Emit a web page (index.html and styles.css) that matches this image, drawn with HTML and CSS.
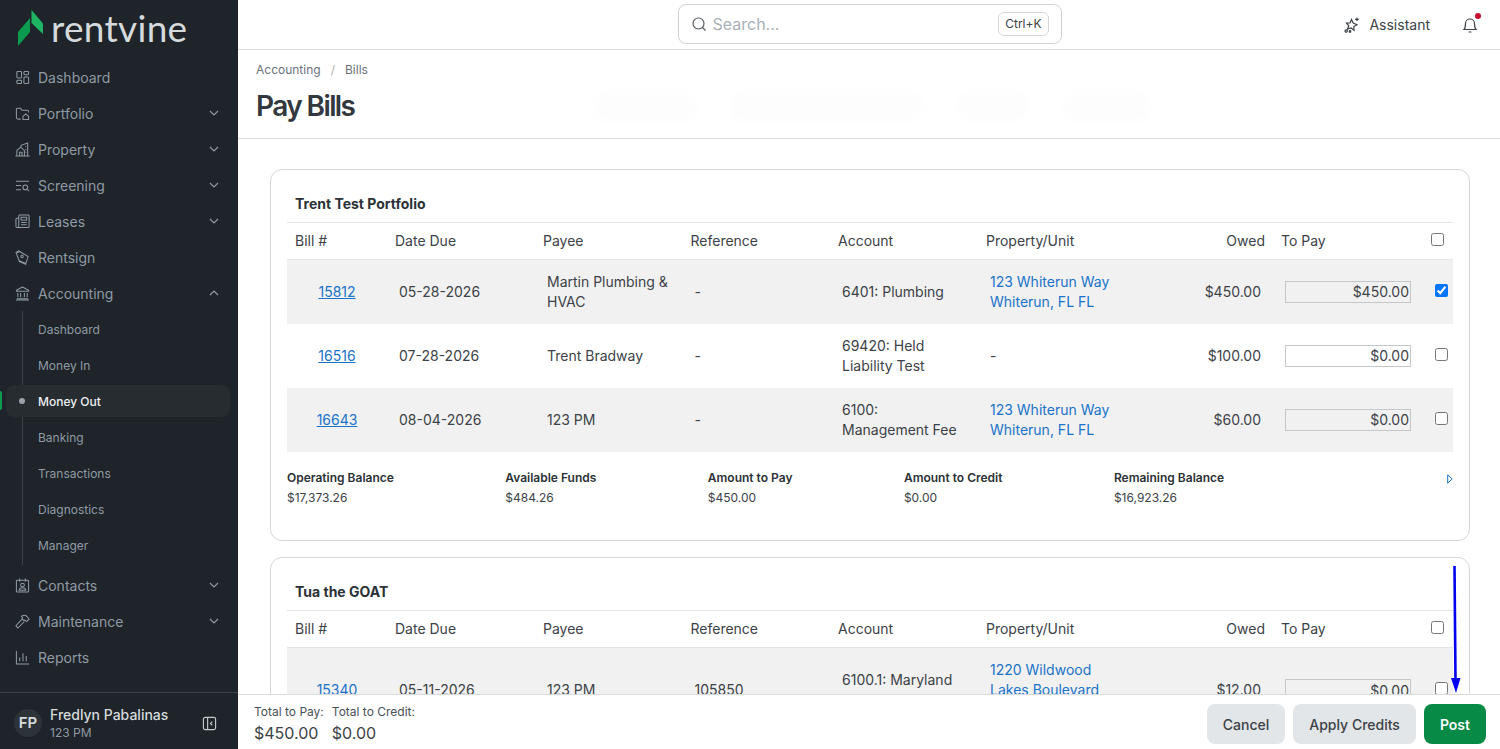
FILE: index.html
```html
<!DOCTYPE html>
<html>
  <head>
    <title>Pay Bills</title>
    <link rel="stylesheet" href="styles.css">
  </head>
  <body>
    <aside class="sidebar">
      <div class="logo">
        <svg class="logo-mark" width="26" height="36" viewBox="0 0 26 36">
          <path d="M13.5 0 25 13.5 V24 L13.5 13 Z" fill="#1fb364"/>
          <path d="M12 8 V22 L0 36 V22 Z" fill="#0c9a4e"/>
        </svg>
        <span class="logo-text">rentvine</span>
      </div>

      <nav class="nav">
        <a class="nav-item">
          <svg class="nav-icon" viewBox="0 0 16 16"><rect x="2" y="1.5" width="5" height="7" rx="1"/><rect x="9.500" y="1.5" width="5" height="3.500" rx="1"/><rect x="2" y="11" width="5" height="3.500" rx="1"/><rect x="9.500" y="7.500" width="5" height="7" rx="1"/></svg>
          Dashboard
        </a>
        <a class="nav-item">
          <svg class="nav-icon" viewBox="0 0 16 16"><path d="M6 14H3a2 2 0 0 1-1.500-2V3.500A1 1 0 0 1 2.500 2.500H6l1.500 2H13a1.500 1.500 0 0 1 1.500 1.500V7"/><path d="M8.500 11 11.500 8.500 14.500 11V14.500H8.500Z"/></svg>
          Portfolio
          <svg class="chevron" viewBox="0 0 12 12"><path d="M2 4 6 8 10 4"/></svg>
        </a>
        <a class="nav-item">
          <svg class="nav-icon" viewBox="0 0 16 16"><path d="M.5 15H15.500M2 15V9L6 5.500 10 9V15M5 15V11H7.500V15M6.500 5V3.500L13.500 1V15M11 5H12M11 8H12M11 11H12"/></svg>
          Property
          <svg class="chevron" viewBox="0 0 12 12"><path d="M2 4 6 8 10 4"/></svg>
        </a>
        <a class="nav-item">
          <svg class="nav-icon" viewBox="0 0 16 16"><path d="M1 3.500H15M1 8H6.500M1 12.500H6.500"/><circle cx="11" cy="10" r="2.500"/><path d="M13 12 15 14"/></svg>
          Screening
          <svg class="chevron" viewBox="0 0 12 12"><path d="M2 4 6 8 10 4"/></svg>
        </a>
        <a class="nav-item">
          <svg class="nav-icon" viewBox="0 0 16 16"><path d="M4 14.500H14a1 1 0 0 0 1-1V2a1 1 0 0 0-1-1H5a1 1 0 0 0-1 1V13a1.500 1.500 0 0 1-3 0V5.500A1 1 0 0 1 2 4.500H4"/><rect x="6.500" y="3.500" width="6" height="3"/><path d="M6.500 9H12.500M6.500 11.500H12.500"/></svg>
          Leases
          <svg class="chevron" viewBox="0 0 12 12"><path d="M2 4 6 8 10 4"/></svg>
        </a>
        <a class="nav-item">
          <svg class="nav-icon" viewBox="0 0 16 16"><path d="M1 2.500 4 1 14 7 11.500 14.500 4.500 11.500Z"/><circle cx="7.500" cy="7" r="1.300"/><path d="M12 15.500 4 12M5 2 1.500 3"/></svg>
          Rentsign
        </a>
        <a class="nav-item">
          <svg class="nav-icon" viewBox="0 0 16 16"><path d="M8 1 14.500 4.500V5.500H1.500V4.500ZM3 7.500V12M6 7.500V12M10 7.500V12M13 7.500V12M2 13.500H14M1 15H15"/></svg>
          Accounting
          <svg class="chevron" viewBox="0 0 12 12"><path d="M2 8 6 4 10 8"/></svg>
        </a>

        <div class="subnav">
          <a class="sub-item">Dashboard</a>
          <a class="sub-item">Money In</a>
          <a class="sub-item active">Money Out</a>
          <a class="sub-item">Banking</a>
          <a class="sub-item">Transactions</a>
          <a class="sub-item">Diagnostics</a>
          <a class="sub-item">Manager</a>
        </div>

        <a class="nav-item">
          <svg class="nav-icon" viewBox="0 0 16 16"><rect x="1.500" y="2.500" width="13" height="12.500" rx="1"/><path d="M5 .5V4M11 .5V4"/><circle cx="8" cy="7.500" r="2"/><path d="M4.500 13C4.800 11 6 10.500 8 10.500S11.200 11 11.500 13Z"/></svg>
          Contacts
          <svg class="chevron" viewBox="0 0 12 12"><path d="M2 4 6 8 10 4"/></svg>
        </a>
        <a class="nav-item">
          <svg class="nav-icon" viewBox="0 0 16 16"><path d="M8 5 1 12.500 3 15 10 8M7 2.500C9 .5 12 1 13 3L15 5.500 12.500 8 10.500 6.500 9.500 7 7.500 5 8 4Z"/></svg>
          Maintenance
          <svg class="chevron" viewBox="0 0 12 12"><path d="M2 4 6 8 10 4"/></svg>
        </a>
        <a class="nav-item">
          <svg class="nav-icon" viewBox="0 0 16 16"><path d="M1.500 1V15H15M5 12V8M8.500 12V3.500M12 12V6.500"/></svg>
          Reports
        </a>
      </nav>

      <div class="user">
        <div class="avatar">FP</div>
        <div class="user-info">
          <div class="user-name">Fredlyn Pabalinas</div>
          <div class="user-org">123 PM</div>
        </div>
        <svg class="collapse" viewBox="0 0 16 16"><rect x="1.500" y="1.500" width="13" height="13" rx="2"/><path d="M6 1.500V14.500M11 6 9 8 11 10"/></svg>
      </div>
    </aside>

    <div class="main">
      <header class="topbar">
        <div class="search">
          <svg class="search-icon" viewBox="0 0 16 16"><circle cx="7.500" cy="7.500" r="5.500"/><path d="M11.500 11.500 14.500 14.500"/></svg>
          <span class="search-text">Search...</span>
          <span class="kbd">Ctrl+K</span>
        </div>
        <div class="top-actions">
          <a class="assistant">
            <svg class="assistant-icon" viewBox="0 0 16 16"><path d="M7.500 2.500 9.200 6 13 7.800 9.800 9.600 10 13.200 7 11 3.500 12 4.800 8.800 2.500 6 6 6Z"/><path d="M13 .5V4M11.200 2.300H14.800"/><circle cx="2.200" cy="14" r="1.200"/><circle cx="6" cy="14.500" r=".8"/></svg>
            Assistant
          </a>
          <div class="bell">
            <svg viewBox="0 0 16 16" width="16" height="16"><path d="M2 12.500C3.500 11 3.500 10 3.500 6.500a4.500 4.500 0 0 1 9 0C12.500 10 12.500 11 14 12.500ZM6.500 15H9.500"/></svg>
            <span class="bell-dot"></span>
          </div>
        </div>
      </header>

      <div class="page-head">
        <div class="crumbs"><span>Accounting</span><span class="crumb-sep">/</span><span>Bills</span></div>
        <div class="title-row">
          <h1>Pay Bills</h1>
          <div class="ghosts">
            <span class="ghost g1"></span><span class="ghost g2"></span><span class="ghost g3"></span><span class="ghost g4"></span>
          </div>
        </div>
      </div>

      <div class="content">
        <section class="card">
          <h2>Trent Test Portfolio</h2>
          <table class="bills">
            <thead>
              <tr>
                <th class="c-bill">Bill #</th><th class="c-date">Date Due</th><th class="c-payee">Payee</th><th class="c-ref">Reference</th><th class="c-acct">Account</th><th class="c-prop">Property/Unit</th><th class="c-owed">Owed</th><th class="c-pay">To Pay</th><th class="c-check"><input type="checkbox"></th>
              </tr>
            </thead>
            <tbody>
              <tr class="shaded">
                <td class="c-bill"><a class="link-u">15812</a></td><td>05-28-2026</td><td>Martin Plumbing &amp; HVAC</td><td>-</td><td>6401: Plumbing</td><td><a class="link">123 Whiterun Way<br>Whiterun, FL FL</a></td><td class="c-owed">$450.00</td><td><input class="pay locked" value="$450.00"></td><td class="c-check"><input type="checkbox" checked></td>
              </tr>
              <tr>
                <td class="c-bill"><a class="link-u">16516</a></td><td>07-28-2026</td><td>Trent Bradway</td><td>-</td><td>69420: Held Liability Test</td><td>-</td><td class="c-owed">$100.00</td><td><input class="pay" value="$0.00"></td><td class="c-check"><input type="checkbox"></td>
              </tr>
              <tr class="shaded">
                <td class="c-bill"><a class="link-u">16643</a></td><td>08-04-2026</td><td>123 PM</td><td>-</td><td>6100: Management Fee</td><td><a class="link">123 Whiterun Way<br>Whiterun, FL FL</a></td><td class="c-owed">$60.00</td><td><input class="pay locked" value="$0.00"></td><td class="c-check"><input type="checkbox"></td>
              </tr>
            </tbody>
          </table>
          <div class="stats">
            <div><b>Operating Balance</b><span>$17,373.26</span></div>
            <div><b>Available Funds</b><span>$484.26</span></div>
            <div><b>Amount to Pay</b><span>$450.00</span></div>
            <div><b>Amount to Credit</b><span>$0.00</span></div>
            <div><b>Remaining Balance</b><span>$16,923.26</span></div>
            <div></div>
            <svg class="expand" viewBox="0 0 6 10"><path d="M.7 .8 5.200 5 .7 9.200Z"/></svg>
          </div>
        </section>

        <section class="card">
          <h2>Tua the GOAT</h2>
          <table class="bills">
            <thead>
              <tr>
                <th class="c-bill">Bill #</th><th class="c-date">Date Due</th><th class="c-payee">Payee</th><th class="c-ref">Reference</th><th class="c-acct">Account</th><th class="c-prop">Property/Unit</th><th class="c-owed">Owed</th><th class="c-pay">To Pay</th><th class="c-check"><input type="checkbox"></th>
              </tr>
            </thead>
            <tbody>
              <tr class="shaded tall">
                <td class="c-bill"><a class="link-u">15340</a></td><td>05-11-2026</td><td>123 PM</td><td>105850</td><td>6100.1: Maryland Management</td><td><a class="link">1220 Wildwood<br>Lakes Boulevard<br>&nbsp;</a></td><td class="c-owed">$12.00</td><td><input class="pay locked" value="$0.00"></td><td class="c-check"><input type="checkbox"></td>
              </tr>
            </tbody>
          </table>
        </section>

        <svg class="annotation" width="12" height="128" viewBox="0 0 12 128"><path d="M3.500 0 4.500 114" stroke="#0000ee" stroke-width="2.600" fill="none"/><path d="M0 112H9.500L5 127Z" fill="#0000ee"/></svg>
      </div>

      <footer class="footer">
        <div class="totals">
          <div><label>Total to Pay:</label><strong>$450.00</strong></div>
          <div><label>Total to Credit:</label><strong>$0.00</strong></div>
        </div>
        <div class="buttons">
          <button class="btn">Cancel</button>
          <button class="btn">Apply Credits</button>
          <button class="btn btn-post">Post</button>
        </div>
      </footer>
    </div>
  </body>
</html>
```

FILE: styles.css
```css
* {
  box-sizing: border-box;
}
html, body {
  height: 100%;
}
body {
  margin: 0;
  display: flex;
  overflow: hidden;
  font-family: Inter, "Liberation Sans", sans-serif;
  font-size: 14px;
  color: #3c4247;
  background-color: white;
}

/* Sidebar */
.sidebar {
  width: 238px;
  flex: none;
  display: flex;
  flex-direction: column;
  background-color: #1e2429;
  color: #8f9aa5;
}
.logo {
  height: 59px;
  flex: none;
  display: flex;
  align-items: flex-start;
  padding: 10px 0 0 18px;
}
.logo-mark {
  flex: none;
}
.logo-text {
  margin-left: 7px;
  font-family: Lato, sans-serif;
  font-size: 37px;
  line-height: 36px;
  font-weight: 400;
  letter-spacing: 0.3px;
  color: #d5dadd;
}
.nav {
  flex: 1;
}
.nav-item {
  position: relative;
  height: 36px;
  display: flex;
  align-items: center;
  padding-left: 15px;
}
.nav-icon {
  width: 15px;
  height: 15px;
  margin-right: 8px;
  fill: none;
  stroke: #8f9aa5;
  stroke-width: 1.1;
}
.chevron {
  position: absolute;
  right: 18px;
  top: 12px;
  width: 12px;
  height: 12px;
  fill: none;
  stroke: #8f9aa5;
  stroke-width: 1.2;
}
.subnav {
  position: relative;
  padding-bottom: 4px;
}
.subnav::before {
  content: "";
  position: absolute;
  left: 22px;
  top: 0;
  bottom: 2px;
  width: 1px;
  background-color: #3b4147;
}
.sub-item {
  position: relative;
  height: 36px;
  display: flex;
  align-items: center;
  padding-left: 38px;
  font-size: 12px;
}
.sub-item.active {
  margin: 2px 8px 2px 6px;
  height: 32px;
  padding-left: 32px;
  border-radius: 8px;
  background-color: #272c31;
  color: #eef0f2;
  font-weight: 500;
}
.sub-item.active::before {
  content: "";
  position: absolute;
  left: 13px;
  top: 13px;
  width: 6px;
  height: 6px;
  border-radius: 50%;
  background-color: #9aa3ab;
}
.sub-item.active::after {
  content: "";
  position: absolute;
  left: -6px;
  top: 6px;
  width: 2px;
  height: 19px;
  border-radius: 0 2px 2px 0;
  background-color: #0c9a4e;
}
.user {
  height: 57px;
  flex: none;
  display: flex;
  align-items: center;
  padding: 4px 21px 0 14px;
  border-top: 1px solid #3b4147;
}
.avatar {
  width: 28px;
  height: 28px;
  border-radius: 50%;
  background-color: #2c3439;
  color: #d5dadd;
  font-size: 15px;
  font-weight: 600;
  line-height: 28px;
  text-align: center;
}
.user-info {
  flex: 1;
  margin: 2px 0 0 8px;
}
.user-name {
  font-size: 14px;
  line-height: 18px;
  font-weight: 500;
  color: #d5dadd;
}
.user-org {
  font-size: 12px;
  line-height: 18px;
  color: #8f9aa5;
}
.collapse {
  width: 15px;
  height: 15px;
  fill: none;
  stroke: #c4cacf;
  stroke-width: 1.2;
}

/* Top bar */
.main {
  flex: 1;
  min-width: 0;
  display: flex;
  flex-direction: column;
}
.topbar {
  height: 50px;
  flex: none;
  position: relative;
  display: flex;
  justify-content: center;
  align-items: flex-start;
  padding-top: 4px;
  border-bottom: 1px solid #d9dcde;
}
.search {
  width: 384px;
  height: 40px;
  margin-left: 1px;
  display: flex;
  align-items: center;
  padding: 0 12px;
  border: 1px solid #cfd3d6;
  border-radius: 8px;
}
.search-icon {
  width: 16px;
  height: 16px;
  fill: none;
  stroke: #555c62;
  stroke-width: 1.2;
}
.search-text {
  flex: 1;
  margin-left: 6px;
  font-size: 16px;
  color: #a9b1b6;
}
.kbd {
  padding: 0 6px;
  height: 24px;
  line-height: 22px;
  border: 1px solid #d4d8da;
  border-radius: 6px;
  font-size: 12px;
  color: #3c4247;
}
.top-actions {
  position: absolute;
  top: 0;
  right: 22px;
  height: 49px;
  display: flex;
  align-items: center;
}
.assistant {
  display: flex;
  align-items: center;
  color: #3c4247;
}
.assistant-icon {
  width: 16px;
  height: 16px;
  margin-right: 9px;
  fill: none;
  stroke: #3c4247;
  stroke-width: 1.2;
}
.bell {
  position: relative;
  width: 16px;
  height: 16px;
  margin-left: 32px;
}
.bell svg {
  fill: none;
  stroke: #3c4247;
  stroke-width: 1.2;
}
.bell-dot {
  position: absolute;
  top: -4px;
  right: -3px;
  width: 6px;
  height: 6px;
  border-radius: 50%;
  background-color: #c8102e;
}

/* Page header */
.page-head {
  height: 89px;
  flex: none;
  padding: 12px 18px 0;
  border-bottom: 1px solid #d9dcde;
}
.crumbs {
  display: flex;
  font-size: 12px;
  line-height: 15px;
  color: #6a7278;
}
.crumb-sep {
  margin: 0 10px;
  color: #a9b1b6;
}
.title-row {
  display: flex;
  align-items: center;
  margin-top: 9px;
}
h1 {
  width: 324px;
  margin: 0;
  font-size: 28px;
  line-height: 40px;
  font-weight: 600;
  letter-spacing: -1.6px;
  color: #32383d;
}
.ghosts {
  display: flex;
  margin-top: 2px;
}
.ghost {
  height: 22px;
  border-radius: 10px;
  background-color: #fdfdfd;
  box-shadow: 0 0 8px 6px #fefefe;
}
.g1 { width: 98px; margin-left: 16px; }
.g2 { width: 186px; margin-left: 40px; }
.g3 { width: 64px; margin-left: 41px; }
.g4 { width: 80px; margin-left: 41px; }

/* Cards */
.content {
  flex: 1;
  min-height: 0;
  position: relative;
  overflow: hidden;
  padding: 30px 30px 0 32px;
}
.card {
  margin-bottom: 16px;
  padding: 0 16px 0 16px;
  border: 1px solid #d4d8da;
  border-radius: 12px;
}
h2 {
  margin: 0;
  padding: 0 0 0 8px;
  height: 52px;
  line-height: 68px;
  font-size: 14px;
  font-weight: 700;
  color: #2b3136;
}
.bills {
  width: 100%;
  table-layout: fixed;
  border-collapse: collapse;
}
.bills th {
  height: 37px;
  padding: 0 8px 2px;
  border-top: 1px solid #e2e5e7;
  border-bottom: 1px solid #e2e5e7;
  text-align: left;
  font-weight: 400;
  color: #3c4247;
}
.bills td {
  height: 64px;
  padding: 0 12px;
  line-height: 20px;
  color: #3c4247;
}
.bills .tall td {
  height: 85px;
}
.shaded td {
  background-color: #f1f1f1;
}
.c-bill { width: 100px; }
.c-date { width: 148px; }
.c-payee { width: 147.5px; }
.c-ref { width: 147.5px; }
.c-acct { width: 148px; }
.c-prop { width: 187px; }
.c-owed { width: 108px; }
.c-pay { width: 150px; }
.c-check { width: 30px; }
td.c-bill {
  text-align: center;
}
.bills .c-owed {
  text-align: right;
}
a.link {
  color: #1a73c9;
}
a.link-u {
  color: #1a73c9;
  text-decoration: underline;
}
.pay {
  width: 126px;
  height: 22px;
  padding: 0 1px 0 0;
  border: 1px solid #c4c8ca;
  border-radius: 0;
  font: inherit;
  color: #3c4247;
  text-align: right;
  background-color: white;
}
.pay.locked {
  background-color: #f1f1f1;
}
input[type="checkbox"] {
  display: block;
  width: 13px;
  height: 13px;
  margin: 0;
}
.bills th input[type="checkbox"] {
  margin-top: -2px;
}
.bills td input[type="checkbox"] {
  margin-top: -3px;
}
.stats {
  display: flex;
  justify-content: space-between;
  height: 88.5px;
  padding-top: 18px;
}
.stats b {
  display: block;
  font-size: 12px;
  line-height: 16px;
  font-weight: 600;
  color: #2b3136;
}
.stats span {
  display: block;
  margin-top: 4px;
  font-size: 12px;
  line-height: 15px;
  color: #3c4247;
}
.expand {
  width: 6px;
  height: 10px;
  margin-top: 4px;
  fill: none;
  stroke: #1a73c9;
  stroke-width: 1;
}
.annotation {
  position: absolute;
  left: 1213px;
  top: 427px;
}

/* Footer */
.footer {
  height: 55px;
  flex: none;
  display: flex;
  justify-content: space-between;
  padding: 9px 14px 0 16px;
  border-top: 1px solid #d9dcde;
  background-color: white;
}
.totals {
  display: flex;
  gap: 8px;
}
.totals label {
  display: block;
  font-size: 12px;
  line-height: 16px;
  color: #4a5157;
}
.totals strong {
  display: block;
  margin-top: 3px;
  font-size: 16px;
  line-height: 20px;
  font-weight: 400;
  color: #3c4247;
}
.buttons {
  display: flex;
  gap: 8px;
}
.btn {
  height: 40px;
  padding: 0 16px;
  border: none;
  border-radius: 8px;
  background-color: #e3e6e8;
  font-family: inherit;
  font-size: 14px;
  font-weight: 500;
  color: #3c4247;
}
.btn-post {
  background-color: #068a45;
  color: white;
  font-weight: 600;
}
```
